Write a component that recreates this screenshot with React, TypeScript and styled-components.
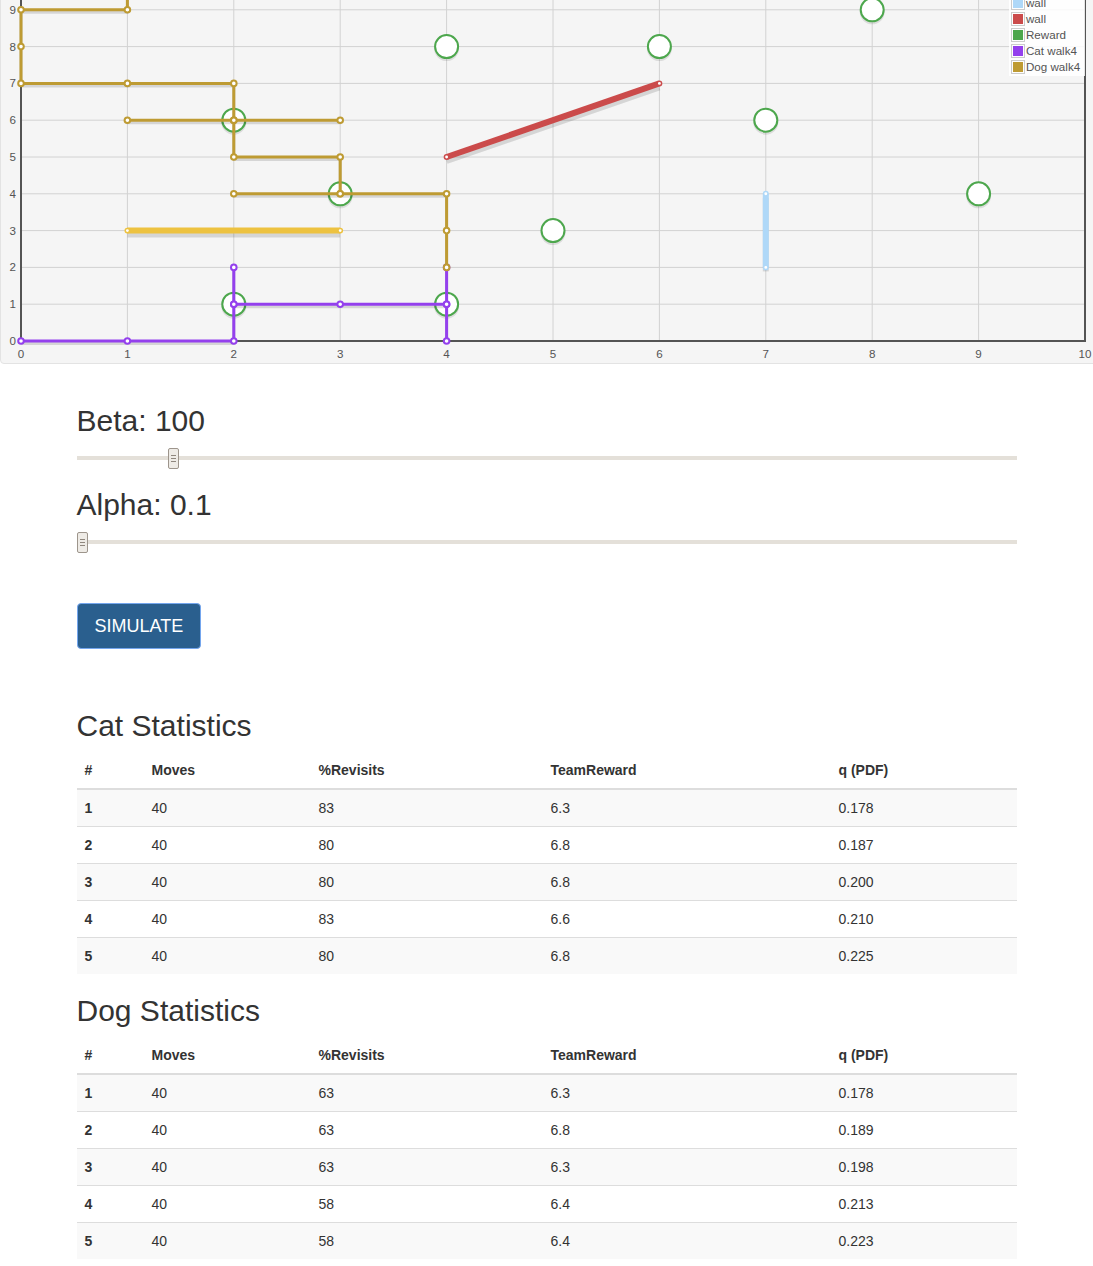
import React from "react";
import styled, { createGlobalStyle } from "styled-components";

const GlobalStyle = createGlobalStyle`
  html, body {
    margin: 0;
    padding: 0;
    overflow: hidden;
    background: #fff;
  }
  body {
    font-family: "Liberation Sans", Arial, Helvetica, sans-serif;
    font-size: 14px;
    line-height: 20px;
    color: #333;
  }
`;

type Pt = [number, number];

// plot area mapping (screen coords)
const X0 = 21;
const XSTEP = 106.4;
const Y0 = 341;
const YSTEP = 36.8;
const sx = (v: number) => X0 + v * XSTEP;
const sy = (v: number) => Y0 - v * YSTEP;

const walls: { color: string; pts: Pt[] }[] = [
  { color: "#edc240", pts: [[1, 3], [3, 3]] },
  { color: "#afd8f8", pts: [[7, 2], [7, 4]] },
  { color: "#cb4b4b", pts: [[4, 5], [6, 7]] },
];

const rewards: Pt[] = [
  [4, 8], [6, 8], [8, 9], [7, 6], [9, 4], [5, 3], [2, 6], [3, 4], [2, 1], [4, 1],
];

const catWalk: Pt[] = [
  [0, 0], [1, 0], [2, 0], [2, 1], [2, 2], [2, 1], [3, 1], [4, 1], [4, 2], [4, 1], [4, 0],
];

const dogWalk: Pt[] = [
  [1, 10], [1, 9], [0, 9], [0, 8], [0, 7], [1, 7], [2, 7], [2, 6], [1, 6], [2, 6], [3, 6],
  [2, 6], [2, 5], [3, 5], [3, 4], [2, 4], [3, 4], [4, 4], [4, 3], [4, 2],
];

const legendItems = [
  { label: "wall", color: "#edc240" },
  { label: "wall", color: "#afd8f8" },
  { label: "wall", color: "#cb4b4b" },
  { label: "Reward", color: "#4da74d" },
  { label: "Cat walk4", color: "#9440ed" },
  { label: "Dog walk4", color: "#be9b33" },
];

const catStats = [
  ["1", "40", "83", "6.3", "0.178"],
  ["2", "40", "80", "6.8", "0.187"],
  ["3", "40", "80", "6.8", "0.200"],
  ["4", "40", "83", "6.6", "0.210"],
  ["5", "40", "80", "6.8", "0.225"],
];

const dogStats = [
  ["1", "40", "63", "6.3", "0.178"],
  ["2", "40", "63", "6.8", "0.189"],
  ["3", "40", "63", "6.3", "0.198"],
  ["4", "40", "58", "6.4", "0.213"],
  ["5", "40", "58", "6.4", "0.223"],
];

const toPoints = (pts: Pt[]) => pts.map(([x, y]) => `${sx(x)},${sy(y)}`).join(" ");

const Series: React.FC<{ pts: Pt[]; color: string; width: number; r: number; sw: number }> = ({
  pts,
  color,
  width,
  r,
  sw,
}) => (
  <g>
    <polyline
      points={toPoints(pts)}
      fill="none"
      stroke="rgba(0,0,0,0.13)"
      strokeWidth={width}
      strokeLinejoin="round"
      transform={`translate(0 ${width / 2 + 1})`}
    />
    <polyline points={toPoints(pts)} fill="none" stroke={color} strokeWidth={width} strokeLinejoin="round" />
    {pts.map(([x, y], i) => (
      <circle key={i} cx={sx(x)} cy={sy(y)} r={r} fill="#fff" stroke={color} strokeWidth={sw} />
    ))}
  </g>
);

const Plot: React.FC = () => {
  const ticksX = Array.from({ length: 11 }, (_, i) => i);
  const ticksY = Array.from({ length: 11 }, (_, i) => i);
  return (
    <PlotSvg width={1098} height={402} viewBox="1 -39 1098 402">
      <g stroke="#d2d2d2" strokeWidth={1}>
        {ticksX.map((v) => (
          <line key={`gx${v}`} x1={sx(v)} y1={sy(10)} x2={sx(v)} y2={Y0} />
        ))}
        {ticksY.map((v) => (
          <line key={`gy${v}`} x1={X0} y1={sy(v)} x2={sx(10)} y2={sy(v)} />
        ))}
      </g>
      <rect x={X0} y={sy(10)} width={sx(10) - X0} height={Y0 - sy(10)} fill="none" stroke="#545454" strokeWidth={2} />
      <g fontSize={11.6} fill="#545454" fontFamily='"Liberation Sans", Arial, sans-serif'>
        {ticksY.slice(0, 10).map((v) => (
          <text key={`ty${v}`} x={16} y={sy(v) + 4} textAnchor="end">
            {v}
          </text>
        ))}
        {ticksX.map((v) => (
          <text key={`tx${v}`} x={sx(v)} y={358} textAnchor="middle">
            {v}
          </text>
        ))}
      </g>

      {walls.map((w, i) => (
        <Series key={i} pts={w.pts} color={w.color} width={6} r={2.2} sw={1.5} />
      ))}

      {rewards.map(([x, y], i) => (
        <g key={`r${i}`}>
          <circle cx={sx(x)} cy={sy(y) + 2} r={11.5} fill="none" stroke="rgba(0,0,0,0.1)" strokeWidth={2} />
          <circle cx={sx(x)} cy={sy(y)} r={11.5} fill="#fff" stroke="#4da74d" strokeWidth={2} />
        </g>
      ))}

      <Series pts={catWalk} color="#9440ed" width={3} r={2.8} sw={2} />
      <Series pts={dogWalk} color="#be9b33" width={3} r={2.8} sw={2} />
    </PlotSvg>
  );
};

const Slider: React.FC<{ pct: number }> = ({ pct }) => (
  <SliderTrack>
    <SliderHandle style={{ left: `calc((100% - 11px) * ${pct})` }} />
  </SliderTrack>
);

const StatsTable: React.FC<{ rows: string[][] }> = ({ rows }) => (
  <Table>
    <colgroup>
      <col style={{ width: 67 }} />
      <col style={{ width: 167 }} />
      <col style={{ width: 232 }} />
      <col style={{ width: 288 }} />
      <col style={{ width: 186 }} />
    </colgroup>
    <thead>
      <tr>
        <HeadCell>#</HeadCell>
        <HeadCell>Moves</HeadCell>
        <HeadCell>%Revisits</HeadCell>
        <HeadCell>TeamReward</HeadCell>
        <HeadCell>q (PDF)</HeadCell>
      </tr>
    </thead>
    <tbody>
      {rows.map((r) => (
        <StripedRow key={r[0]}>
          <RowHead>{r[0]}</RowHead>
          {r.slice(1).map((c, i) => (
            <Cell key={i}>{c}</Cell>
          ))}
        </StripedRow>
      ))}
    </tbody>
  </Table>
);

export default function App() {
  return (
    <>
      <GlobalStyle />
      <ChartPanel>
        <Plot />
        <Legend>
          {legendItems.map((item, i) => (
            <LegendRow key={i}>
              <LegendSwatch>
                <LegendColor $color={item.color} />
              </LegendSwatch>
              <LegendLabel>{item.label}</LegendLabel>
            </LegendRow>
          ))}
        </Legend>
      </ChartPanel>

      <Container>
        <ParamHeading $top={40}>Beta: 100</ParamHeading>
        <Slider pct={0.099} />
        <ParamHeading $top={28}>Alpha: 0.1</ParamHeading>
        <Slider pct={0} />
        <SimulateButton type="button">SIMULATE</SimulateButton>

        <ParamHeading $top={60}>Cat Statistics</ParamHeading>
        <StatsTable rows={catStats} />
        <ParamHeading $top={0}>Dog Statistics</ParamHeading>
        <StatsTable rows={dogStats} />
      </Container>
    </>
  );
}

const ChartPanel = styled.div`
  position: relative;
  box-sizing: border-box;
  width: 1100px;
  height: 404px;
  margin-top: -40px;
  background: #f5f5f5;
  border: 1px solid #e3e3e3;
  border-radius: 4px;
  overflow: hidden;
`;

const PlotSvg = styled.svg`
  display: block;
`;

const Legend = styled.div`
  position: absolute;
  top: 17px;
  right: 14px;
  width: 75px;
  padding: 1px 0 1px 1px;
  background: rgba(255, 255, 255, 0.85);
  display: flex;
  flex-direction: column;
`;

const LegendRow = styled.div`
  display: flex;
  align-items: center;
  height: 16px;
`;

const LegendSwatch = styled.div`
  box-sizing: border-box;
  width: 14px;
  height: 14px;
  padding: 1px;
  border: 1px solid #ccc;
  margin-left: 1px;
`;

const LegendColor = styled.div<{ $color: string }>`
  width: 10px;
  height: 10px;
  background: ${(p) => p.$color};
`;

const LegendLabel = styled.span`
  margin-left: 1px;
  font-size: 11.6px;
  line-height: 14px;
  color: #545454;
  white-space: nowrap;
`;

const Container = styled.div`
  width: 940px;
  margin: 0 auto;
`;

const ParamHeading = styled.h3<{ $top: number }>`
  margin: ${(p) => p.$top}px 0 0;
  font-size: 30px;
  line-height: 33px;
  font-weight: 400;
  color: #333;
`;

const SliderTrack = styled.div`
  position: relative;
  height: 4px;
  margin-top: 19px;
  background: #e4e0d9;
`;

const SliderHandle = styled.div`
  position: absolute;
  top: -8px;
  box-sizing: border-box;
  width: 11px;
  height: 21px;
  background: #eeebe6;
  border: 1px solid #9d958c;
  border-radius: 2px;

  &::before {
    content: "";
    position: absolute;
    left: 2px;
    top: 6px;
    width: 5px;
    height: 1px;
    background: #8f877e;
    box-shadow: 0 3px 0 #8f877e, 0 6px 0 #8f877e;
  }
`;

const SimulateButton = styled.button`
  display: block;
  box-sizing: border-box;
  height: 46px;
  margin-top: 59px;
  padding: 12px 17px;
  font-family: "Liberation Sans", Arial, sans-serif;
  font-size: 18px;
  line-height: 20px;
  color: #fff;
  background: #2a5f8e;
  border: 1px solid #74a6ee;
  border-radius: 4px;
`;

const Table = styled.table`
  width: 100%;
  margin: 10px 0 20px;
  border-collapse: collapse;
  border-spacing: 0;
  table-layout: fixed;
`;

const HeadCell = styled.th`
  padding: 8px;
  text-align: left;
  font-weight: 700;
  vertical-align: bottom;
  border-bottom: 2px solid #ddd;
`;

const StripedRow = styled.tr`
  &:nth-child(odd) {
    background: #f9f9f9;
  }
`;

const Cell = styled.td`
  padding: 8px;
  border-top: 1px solid #ddd;
`;

const RowHead = styled(Cell).attrs({ as: "th" })`
  text-align: left;
  font-weight: 700;
`;
